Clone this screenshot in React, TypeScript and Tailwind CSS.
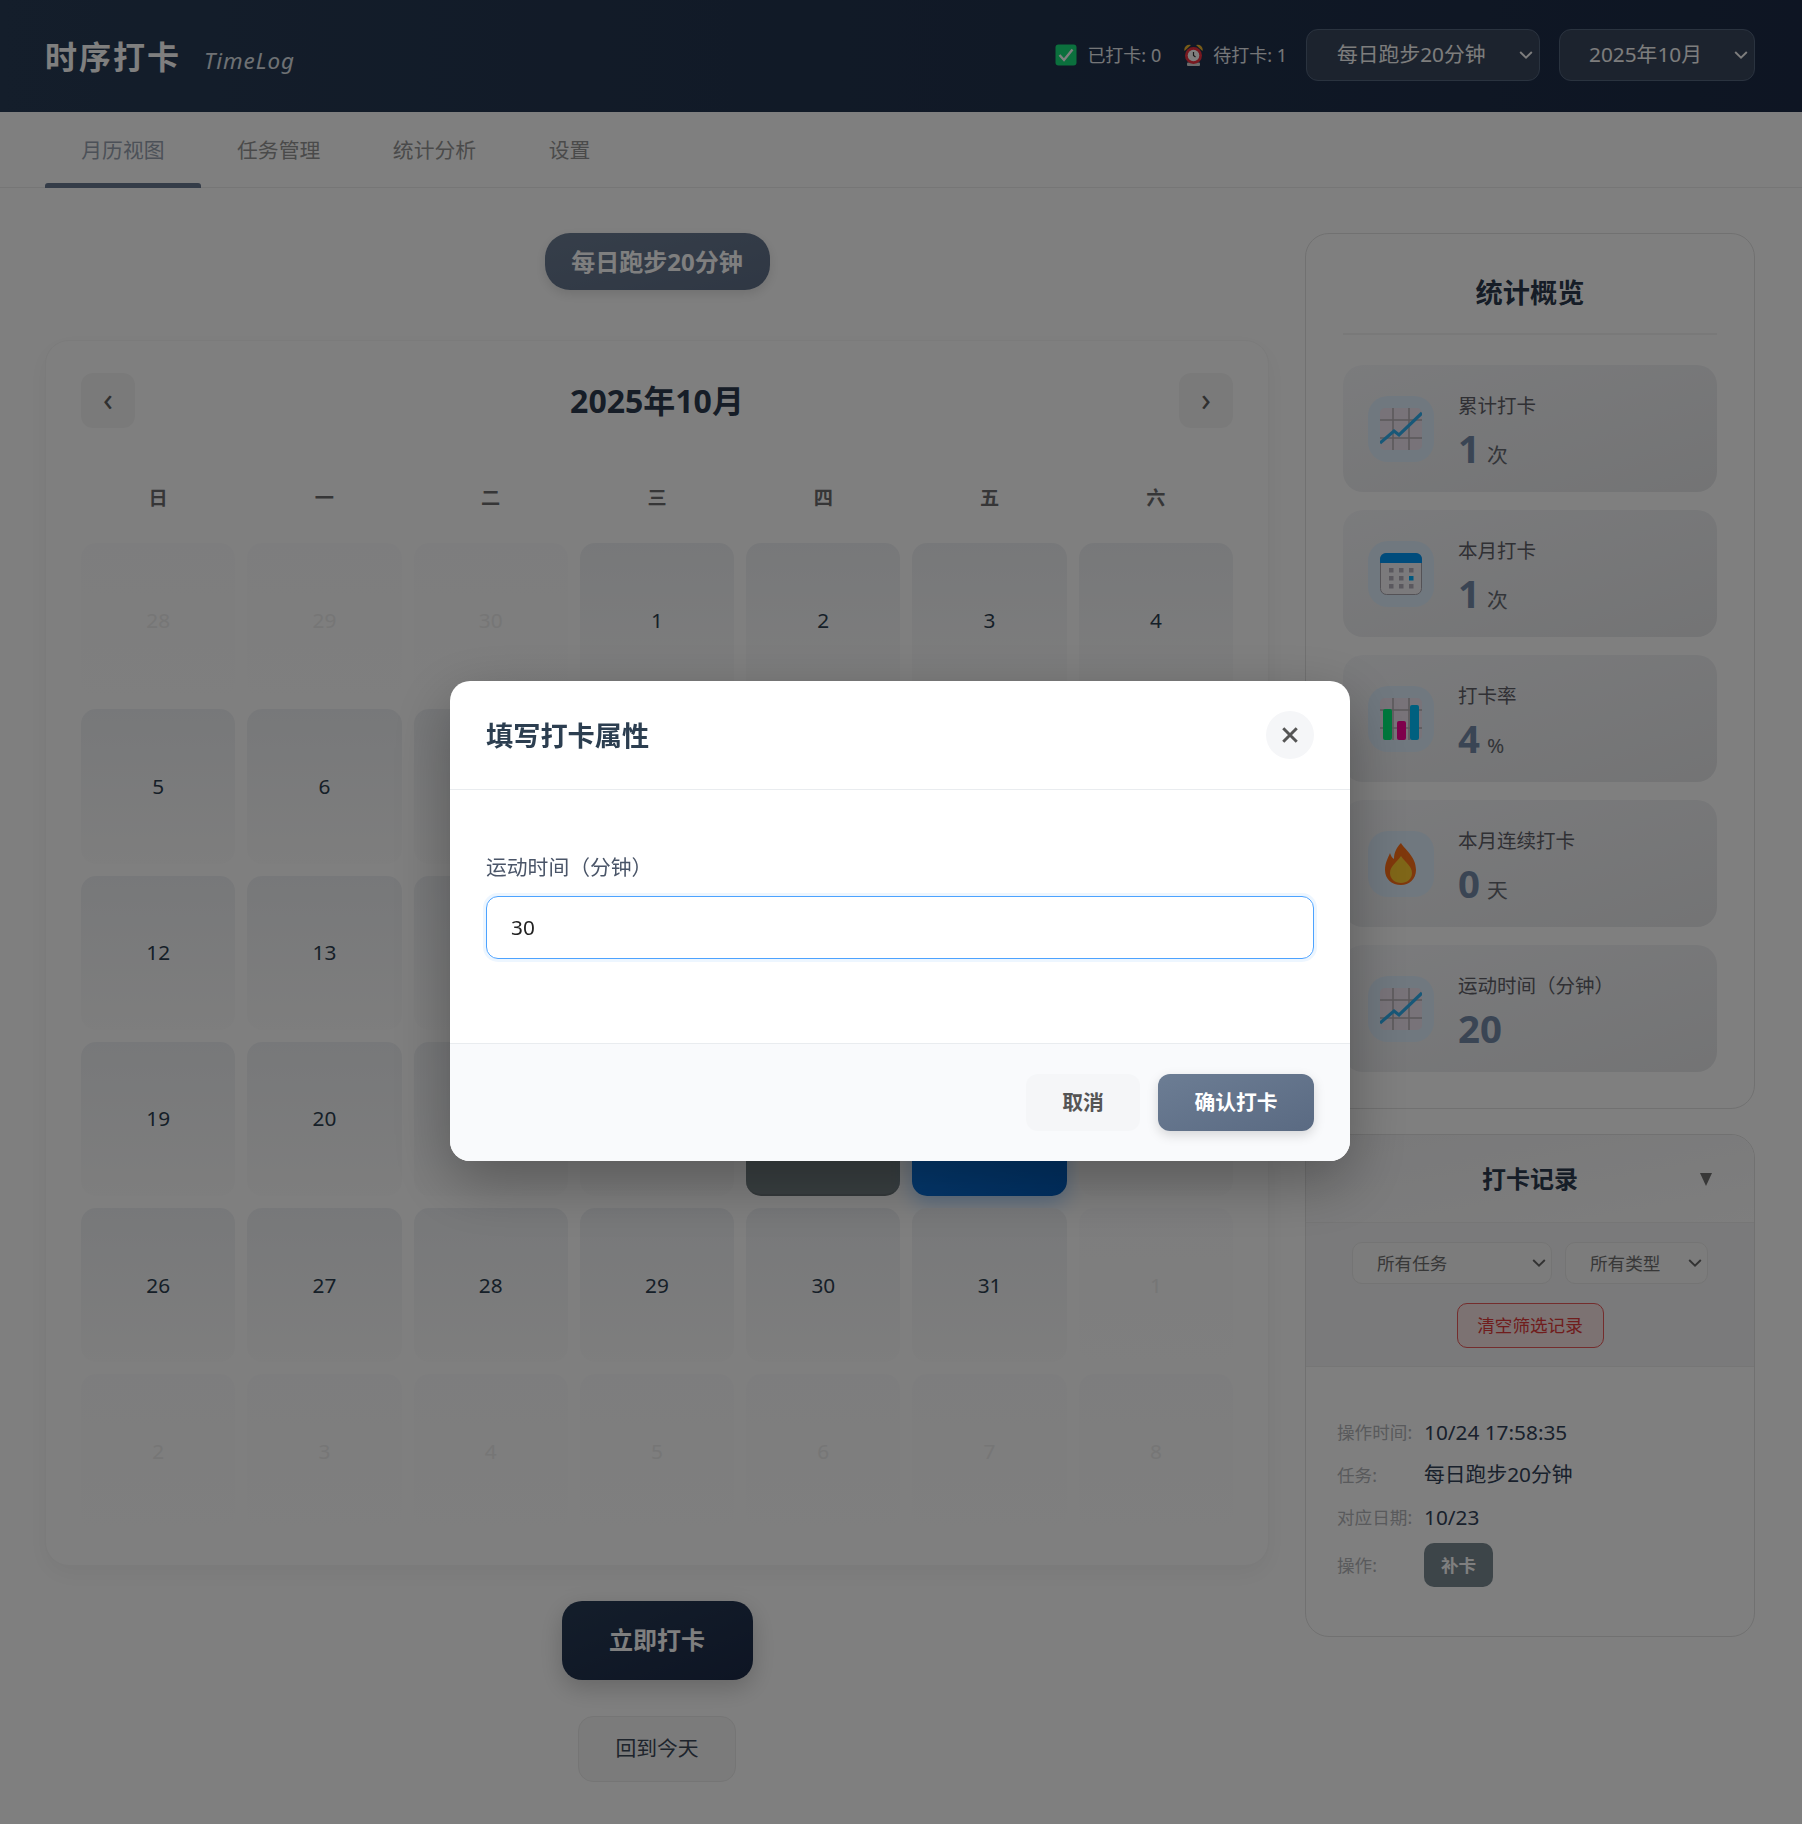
import React from "react";

const font = "font-['Noto_Sans','Noto_Sans_CJK_SC',sans-serif]";

function ChartIcon() {
  return (
    <svg width="42" height="42" viewBox="0 0 42 42">
      <rect x="0" y="0" width="42" height="42" rx="5" fill="#f0e6f2" />
      <path d="M0 12h42M0 30h42M13 0v42M29 0v42" stroke="#b4aeb4" strokeWidth="1.5" />
      <path d="M0 35 L14 23 L19 27 L42 5" stroke="#30b0f0" strokeWidth="3.2" fill="none" />
    </svg>
  );
}

function CalIcon() {
  return (
    <svg width="42" height="42" viewBox="0 0 42 42">
      <rect x="0.5" y="0.5" width="41" height="41" rx="6" fill="#f6f5f8" stroke="#a8a4ac" />
      <path d="M0 10V6a6 6 0 0 1 6-6h30a6 6 0 0 1 6 6v4z" fill="#0098f8" />
      {[9, 19, 29].map((x) =>
        [15, 23, 31].map((y) => (
          <rect key={`${x}-${y}`} x={x} y={y} width="4.5" height="4.5" fill={x === 29 && y === 23 ? "#00b0ff" : "#b4b0bc"} />
        ))
      )}
    </svg>
  );
}

function BarsIcon() {
  return (
    <svg width="42" height="42" viewBox="0 0 42 42">
      <rect x="0" y="0" width="42" height="42" rx="5" fill="#f0e6f2" />
      <path d="M0 12h42M0 30h42M13 0v42M29 0v42" stroke="#b4aeb4" strokeWidth="1.5" />
      <rect x="3" y="11" width="9" height="31" rx="2" fill="#00f078" />
      <rect x="17" y="23" width="9" height="19" rx="2" fill="#ff0098" />
      <rect x="30" y="7" width="9" height="35" rx="2" fill="#00c0ff" />
    </svg>
  );
}

function FireIcon() {
  return (
    <svg width="42" height="42" viewBox="0 0 42 42">
      <path d="M21 0 C24 6 36 13 36 27 C36 36 29 42 21 42 C12 42 5 36 5 27 C5 20 8 15 10 10 C11 13 12 15 14 16 C14 9 17 4 21 0Z" fill="#ff7018" />
      <path d="M21 13 C25 19 32 23 32 30 C32 36 27 40 21 40 C15 40 10 36 10 30 C10 23 17 19 21 13Z" fill="#ffcc30" />
    </svg>
  );
}

function CheckIcon() {
  return (
    <svg width="22" height="22" viewBox="0 0 22 22">
      <rect x="0.5" y="0.5" width="21" height="21" rx="3" fill="#16e07a" />
      <path d="M4.5 11 L9 16 L17.5 5.5" stroke="#fff" strokeWidth="2.4" fill="none" />
    </svg>
  );
}

function AlarmIcon() {
  return (
    <svg width="19" height="22" viewBox="0 0 19 22">
      <path d="M0.5 7 A5 5 0 0 1 7 1 Z" fill="#f2b830" />
      <path d="M18.5 7 A5 5 0 0 0 12 1 Z" fill="#f2b830" />
      <rect x="3" y="18.5" width="13" height="3.5" rx="1" fill="#d8d8d8" />
      <circle cx="9.5" cy="11.5" r="8.5" fill="#f03040" />
      <circle cx="9.5" cy="11.5" r="5.8" fill="#fff" />
      <path d="M9.5 8 V11.5 L11.5 13" stroke="#333" strokeWidth="1.2" fill="none" />
    </svg>
  );
}

function Chevron({ className }: { className: string }) {
  return (
    <svg width="14" height="9" viewBox="0 0 14 9" className={`absolute top-1/2 -translate-y-1/2 pointer-events-none ${className}`}>
      <path d="M1.2 1.5 L7 7.2 L12.8 1.5" fill="none" stroke="currentColor" strokeWidth="1.9" />
    </svg>
  );
}

const stats = [
  { icon: <ChartIcon />, label: "累计打卡", value: "1", unit: "次" },
  { icon: <CalIcon />, label: "本月打卡", value: "1", unit: "次" },
  { icon: <BarsIcon />, label: "打卡率", value: "4", unit: "%" },
  { icon: <FireIcon />, label: "本月连续打卡", value: "0", unit: "天" },
  { icon: <ChartIcon />, label: "运动时间（分钟）", value: "20", unit: "" },
];

type Day = { n: number; muted?: boolean };
const days: Day[] = [
  { n: 28, muted: true },
  { n: 29, muted: true },
  { n: 30, muted: true },
  ...Array.from({ length: 31 }, (_, i) => ({ n: i + 1 })),
  ...Array.from({ length: 8 }, (_, i) => ({ n: i + 1, muted: true })),
];

function DayCell({ d }: { d: Day }) {
  if (d.muted) {
    return (
      <div className="aspect-square rounded-[15px] bg-gradient-to-b from-[#fbfbfc] to-[#fefefe] flex items-center justify-center text-[20.8px] text-[#ececec]">
        {d.n}
      </div>
    );
  }
  if (d.n === 23) {
    return (
      <div className="aspect-square rounded-[15px] bg-[#748084] border-b-2 border-[#6a7478] flex items-center justify-center text-[20.8px] text-white">
        {d.n}
      </div>
    );
  }
  if (d.n === 24) {
    return (
      <div className="aspect-square rounded-[15px] bg-gradient-to-br from-[#1080f0] to-[#0260c4] shadow-[0_8px_20px_rgba(0,123,255,0.3)] flex items-center justify-center text-[20.8px] text-white">
        {d.n}
      </div>
    );
  }
  return (
    <div className="aspect-square rounded-[15px] bg-gradient-to-b from-[#eff1f4] to-[#fcfcfc] flex items-center justify-center text-[20.8px] text-[#2c3e50]">
      {d.n}
    </div>
  );
}

export default function App() {
  return (
    <div className={`${font} w-full bg-white relative`}>
      <header className="h-[112px] pl-[45px] pr-[47px] flex items-center justify-between bg-gradient-to-r from-[#283c56] to-[#1c2b46]">
        <div className="flex items-baseline gap-[23px] pt-[2px]">
          <h1 className="text-[32px] leading-none font-bold tracking-[2px] text-white">时序打卡</h1>
          <span className="text-[22.4px] leading-none italic tracking-[1px] text-[#dfe3e8]">TimeLog</span>
        </div>
        <div className="flex items-center pb-[2px]">
          <div className="flex items-center gap-[10px] text-[18px] text-[#eaecf0] mr-[23px]">
            <CheckIcon />
            <span>已打卡: 0</span>
          </div>
          <div className="flex items-center gap-[10px] text-[18px] text-[#eaecf0] mr-[19px]">
            <AlarmIcon />
            <span>待打卡: 1</span>
          </div>
          <div className="relative w-[234px] h-[52px] mr-[19px] text-[#fafafa]">
            <select className="appearance-none w-full h-full rounded-[12px] border border-[#55667f] bg-[#38465c] pl-[30px] text-[20.8px]">
              <option>每日跑步20分钟</option>
            </select>
            <Chevron className="right-[7px]" />
          </div>
          <div className="relative w-[196px] h-[52px] text-[#fafafa]">
            <select className="appearance-none w-full h-full rounded-[12px] border border-[#55667f] bg-[#38465c] pl-[29px] text-[20.8px]">
              <option>2025年10月</option>
            </select>
            <Chevron className="right-[7px]" />
          </div>
        </div>
      </header>

      <nav className="h-[76px] px-[45px] border-b border-[#ececec] flex">
        {["月历视图", "任务管理", "统计分析", "设置"].map((t, i) => (
          <div key={t} className={`relative px-[36.3px] flex items-center text-[20.8px] pt-[3px] ${i === 0 ? "text-[#98a2b0]" : "text-[#959595]"}`}>
            {t}
            {i === 0 && <span className="absolute left-0 right-0 bottom-[-1px] h-[5px] rounded-t-[3px] bg-[#687890]" />}
          </div>
        ))}
      </nav>

      <main className="px-[45px] pt-[45px] flex gap-[36px] items-start">
        <div className="w-[1224px] flex flex-col items-center pb-[42px]">
          <div className="h-[57px] w-[225px] rounded-[25px] bg-gradient-to-br from-[#6c7d94] to-[#5f6f88] shadow-[0_4px_12px_rgba(0,0,0,0.12)] flex items-center justify-center text-[24px] font-bold text-white mb-[50px]">
            每日跑步20分钟
          </div>

          <section className="w-full rounded-[24px] border border-[#f6f6f6] bg-white shadow-[0_8px_24px_rgba(0,0,0,0.05)] px-[35px] pt-[32px] pb-[36px]">
            <div className="flex items-center justify-between h-[55px] mb-[47px]">
              <button className="w-[54px] h-[55px] rounded-[12px] bg-[#f5f5f5] text-[32px] text-[#606060] leading-none pb-[3px]">‹</button>
              <h2 className="text-[32px] font-bold text-[#2c3a4e]">2025年10月</h2>
              <button className="w-[54px] h-[55px] rounded-[12px] bg-[#f5f5f5] text-[32px] text-[#606060] leading-none pb-[3px]">›</button>
            </div>
            <div className="grid grid-cols-7 gap-x-[12px] h-[46px] mb-[22px]">
              {["日", "一", "二", "三", "四", "五", "六"].map((w) => (
                <div key={w} className="flex items-center justify-center text-[19.2px] font-bold text-[#6c6c6e]">{w}</div>
              ))}
            </div>
            <div className="grid grid-cols-7 gap-[12px]">
              {days.map((d, i) => (
                <DayCell key={i} d={d} />
              ))}
            </div>
          </section>

          <button className="mt-[35px] w-[191px] h-[79px] rounded-[20px] bg-gradient-to-br from-[#283c56] to-[#1c2a48] shadow-[0_8px_24px_rgba(0,0,0,0.2)] text-[24px] font-bold text-white">
            立即打卡
          </button>
          <button className="mt-[36px] w-[158px] h-[66px] rounded-[15px] border border-[#ebebeb] bg-[#f6f6f6] text-[20.8px] text-[#3c4858]">
            回到今天
          </button>
        </div>

        <aside className="w-[450px] flex flex-col gap-[25px]">
          <section className="rounded-[24px] border border-[#e2e2e2] px-[37px] pt-[36px] pb-[36px]">
            <h3 className="text-center text-[27.2px] leading-[46px] font-bold text-[#2c3a4e] pb-[17px] border-b-2 border-[#f2f2f2] mb-[30px]">统计概览</h3>
            <div className="flex flex-col gap-[18px]">
              {stats.map((s) => (
                <div key={s.label} className="h-[127px] rounded-[20px] bg-gradient-to-br from-[#f6f7fa] to-[#e7e8ea] flex items-center px-[25px] gap-[24px]">
                  <div className="w-[66px] h-[66px] rounded-[20px] bg-[#e0f0ff] flex items-center justify-center shrink-0">
                    {s.icon}
                  </div>
                  <div className="flex flex-col pt-[7px]">
                    <span className="text-[19.5px] leading-[28px] text-[#606068]">{s.label}</span>
                    <div className="flex items-baseline gap-[7px] h-[50px] mt-[3px]">
                      <span className="text-[38.4px] leading-[50px] font-bold text-[#758aa8]">{s.value}</span>
                      {s.unit && <span className="text-[20.8px] text-[#666a72]">{s.unit}</span>}
                    </div>
                  </div>
                </div>
              ))}
            </div>
          </section>

          <section className="rounded-[24px] border border-[#e2e2e2] overflow-hidden">
            <div className="relative h-[88px] border-b border-[#ececec] bg-gradient-to-br from-[#f2f2f4] to-[#fcfcfc] flex items-center justify-center">
              <h3 className="text-[24px] font-bold text-[#2c3a4e]">打卡记录</h3>
              <span className="absolute right-[42px] top-[38px] w-0 h-0 border-x-[6.5px] border-x-transparent border-t-[13px] border-t-[#707070]" />
            </div>
            <div className="h-[144px] border-b border-[#ececec] bg-[#f5f5f6] pt-[19px] flex flex-col items-center">
              <div className="flex gap-[13px] mb-[19px]">
                <div className="relative w-[200px] h-[42px] text-[#707070]">
                  <select className="appearance-none w-full h-full rounded-[10px] border border-[#e8e8e8] bg-[#f8f8f8] pl-[24px] text-[17.6px]">
                    <option>所有任务</option>
                  </select>
                  <Chevron className="right-[6px] text-[#666]" />
                </div>
                <div className="relative w-[143px] h-[42px] text-[#707070]">
                  <select className="appearance-none w-full h-full rounded-[10px] border border-[#e8e8e8] bg-[#f8f8f8] pl-[24px] text-[17.6px]">
                    <option>所有类型</option>
                  </select>
                  <Chevron className="right-[6px] text-[#666]" />
                </div>
              </div>
              <button className="w-[147px] h-[45px] rounded-[10px] border border-[#e85a5a] bg-[#f8e4e4] text-[17.6px] text-[#e03a3a]">清空筛选记录</button>
            </div>
            <div className="px-[31px] pt-[44px] pb-[49px]">
              {[
                ["操作时间:", "10/24 17:58:35"],
                ["任务:", "每日跑步20分钟"],
                ["对应日期:", "10/23"],
              ].map(([k, v]) => (
                <div key={k} className="flex items-center h-[42.6px]">
                  <span className="w-[87px] text-[17.6px] text-[#b2b4b8]">{k}</span>
                  <span className="text-[20.8px] text-[#324258]">{v}</span>
                </div>
              ))}
              <div className="flex items-center mt-[4px]">
                <span className="w-[87px] text-[17.6px] text-[#b2b4b8]">操作:</span>
                <span className="w-[69px] h-[44px] rounded-[10px] bg-[#7a8a92] flex items-center justify-center text-[17.6px] font-bold text-white">补卡</span>
              </div>
            </div>
          </section>
        </aside>
      </main>

      <div className="fixed inset-0 bg-black/50 flex items-center justify-center">
        <div className="w-[900px] h-[480px] mt-[18px] mr-[2px] rounded-[20px] bg-white overflow-hidden flex flex-col shadow-[0_20px_60px_rgba(0,0,0,0.3)]">
          <div className="h-[109px] shrink-0 px-[36px] border-b border-[#e9ecef] flex items-center justify-between">
            <h2 className="text-[27.2px] font-bold text-[#2c3e50] pt-[2px]">填写打卡属性</h2>
            <button className="w-[48px] h-[48px] rounded-full bg-[#f5f6f8] flex items-center justify-center text-[#555] ">
              <svg width="18" height="18" viewBox="0 0 16 16"><path d="M2 2 L14 14 M14 2 L2 14" stroke="#555" strokeWidth="2.6" /></svg>
            </button>
          </div>
          <div className="flex-1 px-[36px] pt-[59px]">
            <label className="block text-[20.8px] leading-[36px] text-[#4a5568] mb-[11px]">运动时间（分钟）</label>
            <input
              defaultValue="30"
              className="w-full h-[63px] rounded-[12px] border-[1.5px] border-[#4da3ff] shadow-[0_0_0_3px_rgba(77,163,255,0.1)] px-[24px] pb-[2px] text-[20.8px] text-[#222] outline-none"
            />
          </div>
          <div className="h-[118px] shrink-0 border-t border-[#e9ecef] bg-[#f9fafc] px-[36px] flex items-center justify-end gap-[18px]">
            <button className="w-[114px] h-[57px] rounded-[12px] bg-[#f5f6f8] text-[20.8px] font-bold text-[#555]">取消</button>
            <button className="w-[156px] h-[57px] rounded-[12px] bg-gradient-to-br from-[#6c7d94] to-[#5a6a82] shadow-[0_4px_12px_rgba(0,0,0,0.15)] text-[20.8px] font-bold text-white">确认打卡</button>
          </div>
        </div>
      </div>
    </div>
  );
}
